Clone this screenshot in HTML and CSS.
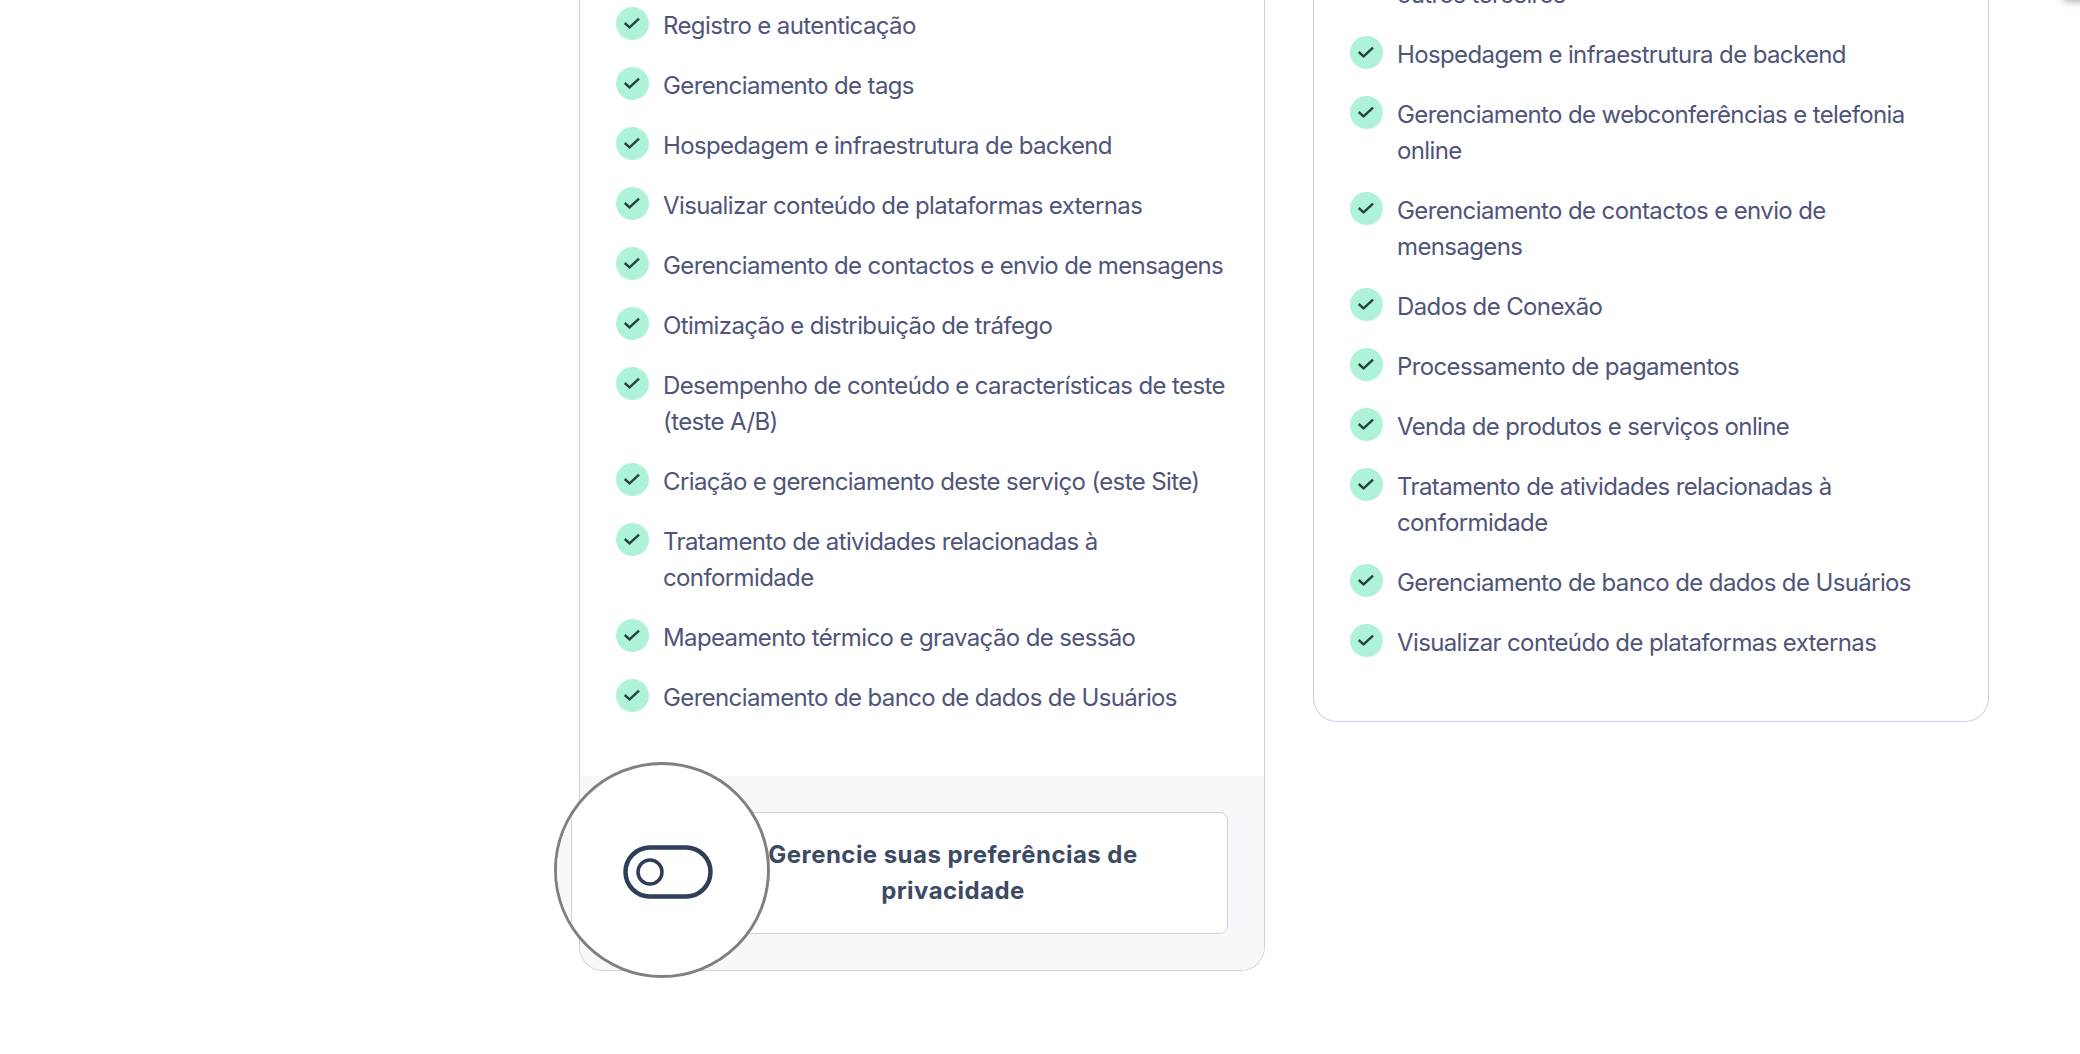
FILE: index.html
```html
<!DOCTYPE html>
<html lang="pt-BR">
<head>
<meta charset="utf-8">
<title>Gerencie suas preferências de privacidade</title>
<link rel="stylesheet" href="styles.css">
</head>
<body>
<main class="columns">
  <section class="card card-left">
    <ul class="list">
      <li class="item"><svg class="check" viewBox="0 0 34 34"><circle cx="17" cy="17" r="17"/><path d="M9 16.500l5 4.500 9.700-9"/></svg><span>Registro e autenticação</span></li>
      <li class="item"><svg class="check" viewBox="0 0 34 34"><circle cx="17" cy="17" r="17"/><path d="M9 16.500l5 4.500 9.700-9"/></svg><span>Gerenciamento de tags</span></li>
      <li class="item"><svg class="check" viewBox="0 0 34 34"><circle cx="17" cy="17" r="17"/><path d="M9 16.500l5 4.500 9.700-9"/></svg><span>Hospedagem e infraestrutura de backend</span></li>
      <li class="item"><svg class="check" viewBox="0 0 34 34"><circle cx="17" cy="17" r="17"/><path d="M9 16.500l5 4.500 9.700-9"/></svg><span>Visualizar conteúdo de plataformas externas</span></li>
      <li class="item"><svg class="check" viewBox="0 0 34 34"><circle cx="17" cy="17" r="17"/><path d="M9 16.500l5 4.500 9.700-9"/></svg><span>Gerenciamento de contactos e envio de mensagens</span></li>
      <li class="item"><svg class="check" viewBox="0 0 34 34"><circle cx="17" cy="17" r="17"/><path d="M9 16.500l5 4.500 9.700-9"/></svg><span>Otimização e distribuição de tráfego</span></li>
      <li class="item"><svg class="check" viewBox="0 0 34 34"><circle cx="17" cy="17" r="17"/><path d="M9 16.500l5 4.500 9.700-9"/></svg><span>Desempenho de conteúdo e características de teste (teste A/B)</span></li>
      <li class="item"><svg class="check" viewBox="0 0 34 34"><circle cx="17" cy="17" r="17"/><path d="M9 16.500l5 4.500 9.700-9"/></svg><span>Criação e gerenciamento deste serviço (este Site)</span></li>
      <li class="item"><svg class="check" viewBox="0 0 34 34"><circle cx="17" cy="17" r="17"/><path d="M9 16.500l5 4.500 9.700-9"/></svg><span>Tratamento de atividades relacionadas à conformidade</span></li>
      <li class="item"><svg class="check" viewBox="0 0 34 34"><circle cx="17" cy="17" r="17"/><path d="M9 16.500l5 4.500 9.700-9"/></svg><span>Mapeamento térmico e gravação de sessão</span></li>
      <li class="item"><svg class="check" viewBox="0 0 34 34"><circle cx="17" cy="17" r="17"/><path d="M9 16.500l5 4.500 9.700-9"/></svg><span>Gerenciamento de banco de dados de Usuários</span></li>
    </ul>
    <footer class="card-foot">
      <button class="prefs" type="button">Gerencie suas preferências de privacidade</button>
    </footer>
  </section>
  <section class="card card-right">
    <ul class="list">
      <li class="item item-cut"><span>outros terceiros</span></li>
      <li class="item"><svg class="check" viewBox="0 0 34 34"><circle cx="17" cy="17" r="17"/><path d="M9 16.500l5 4.500 9.700-9"/></svg><span>Hospedagem e infraestrutura de backend</span></li>
      <li class="item"><svg class="check" viewBox="0 0 34 34"><circle cx="17" cy="17" r="17"/><path d="M9 16.500l5 4.500 9.700-9"/></svg><span>Gerenciamento de webconferências e telefonia online</span></li>
      <li class="item"><svg class="check" viewBox="0 0 34 34"><circle cx="17" cy="17" r="17"/><path d="M9 16.500l5 4.500 9.700-9"/></svg><span>Gerenciamento de contactos e envio de mensagens</span></li>
      <li class="item"><svg class="check" viewBox="0 0 34 34"><circle cx="17" cy="17" r="17"/><path d="M9 16.500l5 4.500 9.700-9"/></svg><span>Dados de Conexão</span></li>
      <li class="item"><svg class="check" viewBox="0 0 34 34"><circle cx="17" cy="17" r="17"/><path d="M9 16.500l5 4.500 9.700-9"/></svg><span>Processamento de pagamentos</span></li>
      <li class="item"><svg class="check" viewBox="0 0 34 34"><circle cx="17" cy="17" r="17"/><path d="M9 16.500l5 4.500 9.700-9"/></svg><span>Venda de produtos e serviços online</span></li>
      <li class="item"><svg class="check" viewBox="0 0 34 34"><circle cx="17" cy="17" r="17"/><path d="M9 16.500l5 4.500 9.700-9"/></svg><span>Tratamento de atividades relacionadas à conformidade</span></li>
      <li class="item"><svg class="check" viewBox="0 0 34 34"><circle cx="17" cy="17" r="17"/><path d="M9 16.500l5 4.500 9.700-9"/></svg><span>Gerenciamento de banco de dados de Usuários</span></li>
      <li class="item"><svg class="check" viewBox="0 0 34 34"><circle cx="17" cy="17" r="17"/><path d="M9 16.500l5 4.500 9.700-9"/></svg><span>Visualizar conteúdo de plataformas externas</span></li>
    </ul>
  </section>
</main>
<div class="corner-shadow"></div>
<div class="lens">
  <div class="lens-strip"></div>
  <svg class="lens-icon" viewBox="0 0 90 54"><rect class="lens-track" x="2.500" y="2.500" width="85" height="49" rx="24.500"/><circle class="lens-knob" cx="27" cy="27" r="12"/></svg>
</div>
</body>
</html>
```

FILE: styles.css
```css
html, body {
  margin: 0;
  height: 100%;
  overflow: hidden;
  background: #fff;
}
body {
  position: relative;
  font-family: "Inter", "Liberation Sans", sans-serif;
  color: #4e5579;
}
.columns {
  display: flex;
  align-items: flex-start;
  gap: 48px;
  padding-left: 579px;
  margin-top: -60px;
}
.card {
  box-sizing: border-box;
  border: 1px solid #cdd1e8;
  border-top: 0;
  border-radius: 0 0 24px 24px;
  background: #fff;
  overflow: hidden;
}
.card-left { width: 686px; }
.card-right { width: 676px; }
.list {
  list-style: none;
  margin: 0;
  padding: 68px 36px 60px;
  display: flex;
  flex-direction: column;
  gap: 24px;
}
.card-right .list { padding-top: 37px; }
.item {
  display: flex;
  gap: 14px;
  font-size: 24px;
  line-height: 36px;
  letter-spacing: -0.62px;
}
.item-cut { padding-left: 47px; }
.check {
  flex: none;
  width: 33px;
  height: 33px;
  margin-top: -1px;
  fill: none;
}
.check circle { fill: #aef2d8; }
.check path {
  stroke: #26443c;
  stroke-width: 2.500;
  fill: none;
}
.card-foot {
  background: #f7f8fa;
  padding: 36px;
}
.prefs {
  display: block;
  box-sizing: border-box;
  width: 100%;
  height: 122px;
  padding: 0 36px 0 98px;
  border: 1px solid #cdd1e8;
  border-radius: 8px;
  background: #fff;
  font: 700 24px/36px "Inter", "Liberation Sans", sans-serif;
  letter-spacing: 0.45px;
  color: #3c4a63;
  text-align: center;
}
.corner-shadow {
  position: absolute;
  left: 2064px;
  top: -30px;
  width: 60px;
  height: 30px;
  box-shadow: 0 0 10px rgba(0, 0, 0, 0.45);
}
.lens {
  position: absolute;
  left: 554px;
  top: 762px;
  box-sizing: border-box;
  width: 216px;
  height: 216px;
  border: 3px solid #808080;
  border-radius: 50%;
  background: #fff;
  overflow: hidden;
}
.lens-strip {
  box-sizing: border-box;
  width: 15px;
  height: 100%;
  background: #f7f8fa;
  border-right: 1px solid #cdd1e8;
}
.lens-icon {
  position: absolute;
  left: 66px;
  top: 80px;
  width: 90px;
  height: 54px;
  fill: none;
  stroke: #2e3d58;
}
.lens-track { stroke-width: 4.500; }
.lens-knob { stroke-width: 3.500; }
```
